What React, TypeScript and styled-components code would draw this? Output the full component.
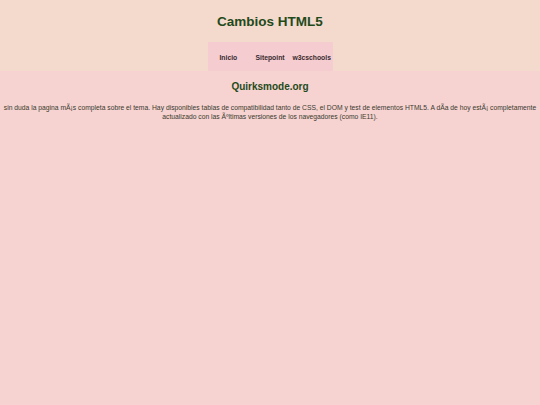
import React from "react";
import styled, { createGlobalStyle } from "styled-components";

const Global = createGlobalStyle`
  html, body { margin: 0; padding: 0; }
  body {
    background: #f6d3d1;
    font-family: "Liberation Sans", Arial, sans-serif;
    min-height: 405px;
  }
`;

const Header = styled.header`
  background: #f4d9cd;
  display: flex;
  flex-direction: column;
  align-items: center;
  height: 71px;
`;

const Title = styled.h1`
  margin: 13px 0 0;
  height: 29px;
  font-size: 13.5px;
  line-height: 18px;
  font-weight: bold;
  color: #1f4a1a;
`;

const Nav = styled.nav`
  display: flex;
  width: 125px;
  height: 29px;
  background: #f5cccf;
  align-items: center;
`;

const NavLink = styled.a`
  flex: 1;
  text-align: center;
  white-space: nowrap;
  font-size: 6.8px;
  font-weight: bold;
  color: #3a2a30;
  text-decoration: none;
  padding-top: 1px;
`;

const Main = styled.main`
  padding: 0 2px;
  text-align: center;
`;

const SubTitle = styled.h2`
  margin: 9px 0 0;
  font-size: 10px;
  line-height: 13px;
  font-weight: bold;
  color: #1f4a1a;
`;

const Para = styled.p`
  margin: 10px 0 0;
  font-size: 6.75px;
  line-height: 9.3px;
  color: #3a3a2e;
`;

export default function App() {
  return (
    <>
      <Global />
      <Header>
        <Title>Cambios HTML5</Title>
        <Nav>
          <NavLink>Inicio</NavLink>
          <NavLink>Sitepoint</NavLink>
          <NavLink>w3cschools</NavLink>
        </Nav>
      </Header>
      <Main>
        <SubTitle>Quirksmode.org</SubTitle>
        <Para>
          sin duda la pagina mÃ¡s completa sobre el tema. Hay disponibles tablas de compatibilidad tanto de CSS, el DOM y test de elementos HTML5. A dÃa de hoy estÃ¡ completamente actualizado con las Ãºltimas versiones de los navegadores (como IE11).
        </Para>
      </Main>
    </>
  );
}
